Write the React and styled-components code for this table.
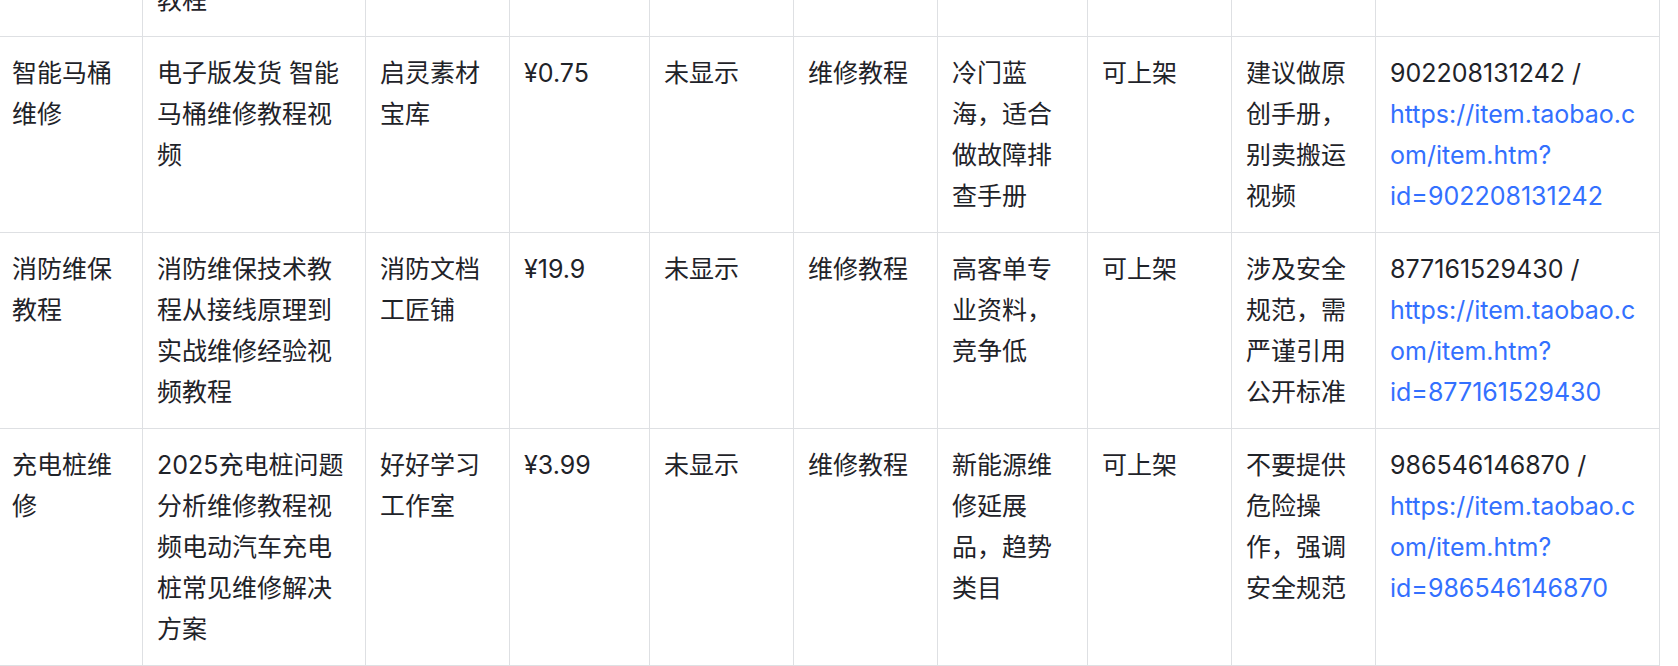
import React from "react";
import styled, { createGlobalStyle } from "styled-components";

const GlobalStyle = createGlobalStyle`
  html, body {
    margin: 0;
    padding: 0;
    background: #ffffff;
  }
  body {
    overflow: hidden;
  }
`;

const Viewport = styled.div`
  width: 1678px;
  height: 666px;
  overflow: hidden;
  background: #ffffff;
`;

const Table = styled.table`
  border-collapse: collapse;
  table-layout: fixed;
  width: 1662px;
  margin: -37px 0 0 -3px;
  font-family: Inter, "Noto Sans CJK SC", "Noto Sans", sans-serif;
  font-size: 25px;
  line-height: 41px;
  color: #1f2329;
`;

const Col = styled.col`
  width: ${(p) => p.$w}px;
`;

const Cell = styled.td`
  border: 1px solid #dee0e3;
  padding: 16px 14px 15px;
  vertical-align: top;
  text-align: left;
  overflow-wrap: break-word;
  word-break: normal;
`;

const Link = styled.a`
  color: #3370ff;
  text-decoration: none;
`;

const widths = [145, 223, 144, 140, 144, 144, 150, 144, 144, 284];

const rows = [
  {
    name: "智能马桶维修",
    title: "电子版发货 智能马桶维修教程视频",
    shop: "启灵素材宝库",
    price: "¥0.75",
    sales: "未显示",
    cat: "维修教程",
    reason: "冷门蓝海，适合做故障排查手册",
    status: "可上架",
    note: "建议做原创手册，别卖搬运视频",
    id: "902208131242",
  },
  {
    name: "消防维保教程",
    title: "消防维保技术教程从接线原理到实战维修经验视频教程",
    shop: "消防文档工匠铺",
    price: "¥19.9",
    sales: "未显示",
    cat: "维修教程",
    reason: "高客单专业资料，竞争低",
    status: "可上架",
    note: "涉及安全规范，需严谨引用公开标准",
    id: "877161529430",
  },
  {
    name: "充电桩维修",
    title: "2025充电桩问题分析维修教程视频电动汽车充电桩常见维修解决方案",
    shop: "好好学习工作室",
    price: "¥3.99",
    sales: "未显示",
    cat: "维修教程",
    reason: "新能源维修延展品，趋势类目",
    status: "可上架",
    note: "不要提供危险操作，强调安全规范",
    id: "986546146870",
  },
];

export default function App() {
  return (
    <>
      <GlobalStyle />
      <Viewport>
        <Table>
          <colgroup>
            {widths.map((w, i) => (
              <Col key={i} $w={w} />
            ))}
          </colgroup>
          <tbody>
            <tr>
              <Cell />
              <Cell>教程</Cell>
              <Cell />
              <Cell />
              <Cell />
              <Cell />
              <Cell />
              <Cell />
              <Cell />
              <Cell />
            </tr>
            {rows.map((r) => {
              const url = `https://item.taobao.com/item.htm?id=${r.id}`;
              return (
                <tr key={r.id}>
                  <Cell>{r.name}</Cell>
                  <Cell>{r.title}</Cell>
                  <Cell>{r.shop}</Cell>
                  <Cell>{r.price}</Cell>
                  <Cell>{r.sales}</Cell>
                  <Cell>{r.cat}</Cell>
                  <Cell>{r.reason}</Cell>
                  <Cell>{r.status}</Cell>
                  <Cell>{r.note}</Cell>
                  <Cell>
                    {r.id} / <Link href={url}>{url}</Link>
                  </Cell>
                </tr>
              );
            })}
          </tbody>
        </Table>
      </Viewport>
    </>
  );
}
